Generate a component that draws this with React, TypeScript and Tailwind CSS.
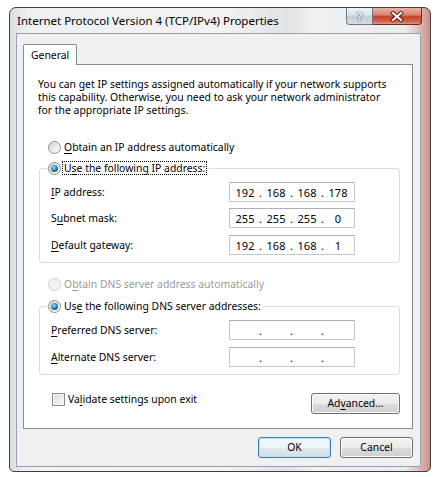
import React, { Fragment } from "react";

const U = ({ c }: { c: string }) => (
  <span className="underline decoration-1 underline-offset-[2px]">{c}</span>
);

function Radio({ checked, disabled }: { checked?: boolean; disabled?: boolean }) {
  return (
    <span
      className={
        disabled
          ? "w-[13px] h-[13px] rounded-full border border-[#cdd0d3] bg-[#f3f3f3] shrink-0 flex items-center justify-center"
          : "w-[13px] h-[13px] rounded-full border border-[#8b8f94] bg-[linear-gradient(135deg,#d2d4d6,#fdfdfd)] shrink-0 flex items-center justify-center"
      }
    >
      {checked && (
        <span className="w-[7px] h-[7px] rounded-full bg-[radial-gradient(circle_at_40%_35%,#9bdcf8,#2a6fa3_55%,#123f66)]" />
      )}
    </span>
  );
}

function IpBox({ parts }: { parts: string[] }) {
  return (
    <div className="w-[126px] h-[20px] border border-[#c3c9d0] border-t-[#abb0b8] bg-white flex items-center pl-[3px] text-black text-[11px]">
      {parts.map((p, i) => (
        <Fragment key={i}>
          {i > 0 && <span className="w-[7px] text-center">.</span>}
          <span className="w-[24px] text-center">{p}</span>
        </Fragment>
      ))}
    </div>
  );
}

function Row({ label, parts, gap }: { label: React.ReactNode; parts: string[]; gap: string }) {
  return (
    <div className={"flex items-center " + gap}>
      <div className="w-[178px]">{label}</div>
      <IpBox parts={parts} />
    </div>
  );
}

function Btn({ children, def, w }: { children: React.ReactNode; def?: boolean; w: string }) {
  return (
    <div
      className={
        (def
          ? "border-[#3c7fb1] shadow-[inset_0_0_0_1px_#b6e4f7] bg-[linear-gradient(#f4f8fb_0%,#eef3f7_50%,#e1e8ee_51%,#d6dee6_100%)] "
          : "border-[#707070] shadow-[inset_0_0_0_1px_#fbfbfb] bg-[linear-gradient(#f2f2f2_0%,#ebebeb_50%,#dddddd_51%,#cfcfcf_100%)] ") +
        w +
        " h-[21px] rounded-[3px] border flex items-center justify-center text-black"
      }
    >
      {children}
    </div>
  );
}

export default function App() {
  return (
    <div
      className="w-[441px] h-[477px] bg-white pt-[7px] pl-[9px] text-[10.4px] leading-[13px] text-black"
      style={{ fontFamily: '"Noto Sans", "Open Sans", sans-serif' }}
    >
      <div className="w-[422px] h-[465px] rounded-t-[7px] rounded-b-[5px] border border-[#3d4146] bg-[linear-gradient(90deg,#d9dde1_0%,#eef0f2_4%,#f2f3f4_50%,#dfe3e6_66%,#eff1f3_72%,#e9ecef_94%,#dcb3ae_98%,#c98e88_100%)] pl-[6px] pr-[9px] pb-[4px] flex flex-col">
        {/* title bar */}
        <div className="h-[25px] flex items-start">
          <div className="pl-[1px] pt-[5px] text-[11.5px] leading-[15px] text-black whitespace-nowrap">
            Internet Protocol Version 4 (TCP/IPv4) Properties
          </div>
          <div className="ml-auto -mr-[1px] flex">
            <div className="w-[27px] h-[17px] rounded-bl-[4px] border border-t-0 border-[#6e7781] bg-[linear-gradient(#eef1f4_0%,#dce2e8_45%,#c4ccd4_50%,#d6dde3_100%)] flex items-center justify-center">
              <span className="text-[13px] leading-[13px] font-bold text-[#f4f6f8] [text-shadow:0_0_1px_#3a4048,0_0_1px_#3a4048]">?</span>
            </div>
            <div className="w-[49px] h-[17px] rounded-br-[4px] border border-l-0 border-t-0 border-[#6b2b22] bg-[linear-gradient(#eab2a3_0%,#d98470_45%,#c4402a_50%,#d0644c_85%,#e49c7c_100%)] flex items-center justify-center">
              <svg width="14" height="11" viewBox="0 0 14 11">
                <path d="M3 2 L11 9 M11 2 L3 9" stroke="#4a1a12" strokeWidth="4" strokeLinecap="square" />
                <path d="M3 2 L11 9 M11 2 L3 9" stroke="#ffffff" strokeWidth="2.2" strokeLinecap="square" />
              </svg>
            </div>
          </div>
        </div>

        {/* client */}
        <div className="w-[405px] h-[434px] border border-[#97a1ab] bg-[#f0f0f0] pl-[6px] pt-[10px] flex flex-col">
          <div className="relative z-10 -mb-[1px] w-[54px] h-[21px] border border-b-0 border-[#898c95] bg-white rounded-t-[2px] flex items-center pl-[7px]">
            General
          </div>
          <div className="w-[390px] h-[365px] border border-[#898c95] bg-white flex flex-col">
            <div className="mt-[13px] ml-[14px] whitespace-nowrap">
              You can get IP settings assigned automatically if your network supports
              <br />
              this capability. Otherwise, you need to ask your network administrator
              <br />
              for the appropriate IP settings.
            </div>

            <div className="mt-[23px] ml-[24px] h-[14px] flex items-center gap-[2px]">
              <Radio />
              <span className="pl-[1px]">
                <U c="O" />btain an IP address automatically
              </span>
            </div>

            <div className="mt-[14px] ml-[15px] mr-[12px] border border-[#d5dfe5] rounded-[3px] pl-[11px] pb-[7px]">
              <div className="-mt-[8px] -ml-[3px] h-[14px] w-fit bg-white pr-[2px] flex items-center gap-[1px]">
                <Radio checked />
                <span className="border border-dotted border-[#000] px-[1px] h-[14px] leading-[12px]">
                  U<U c="s" />e the following IP address:
                </span>
              </div>
              <Row label={<><U c="I" />P address:</>} parts={["192", "168", "168", "178"]} gap="mt-[7px]" />
              <Row label={<>S<U c="u" />bnet mask:</>} parts={["255", "255", "255", "0"]} gap="mt-[6px]" />
              <Row label={<><U c="D" />efault gateway:</>} parts={["192", "168", "168", "1"]} gap="mt-[7px]" />
            </div>

            <div className="mt-[14px] ml-[24px] h-[14px] flex items-center gap-[2px] text-[#9a9a9a]">
              <Radio disabled />
              <span className="pl-[1px]">
                O<U c="b" />tain DNS server address automatically
              </span>
            </div>

            <div className="mt-[15px] ml-[15px] mr-[12px] border border-[#d5dfe5] rounded-[3px] pl-[11px] pb-[7px]">
              <div className="-mt-[8px] -ml-[3px] h-[14px] w-fit bg-white pr-[2px] flex items-center gap-[2px]">
                <Radio checked />
                <span className="pl-[1px]">
                  Us<U c="e" /> the following DNS server addresses:
                </span>
              </div>
              <Row label={<><U c="P" />referred DNS server:</>} parts={["", "", "", ""]} gap="mt-[7px]" />
              <Row label={<><U c="A" />lternate DNS server:</>} parts={["", "", "", ""]} gap="mt-[7px]" />
            </div>

            <div className="mt-[18px] ml-[28px] mr-[12px] flex items-start justify-between">
              <div className="flex items-center gap-[3px] h-[13px]">
                <span className="w-[13px] h-[13px] border border-[#8f8f8f] bg-[linear-gradient(135deg,#dcdcdc,#f8f8f8)] shadow-[inset_0_0_0_1px_#f4f4f4]" />
                <span>
                  Va<U c="l" />idate settings upon exit
                </span>
              </div>
              <Btn w="w-[89px]">
                Ad<U c="v" />anced...
              </Btn>
            </div>
          </div>

          <div className="mt-[8px] w-[390px] flex justify-end gap-[9px]">
            <Btn def w="w-[73px]">OK</Btn>
            <Btn w="w-[73px]">Cancel</Btn>
          </div>
        </div>
      </div>
    </div>
  );
}
